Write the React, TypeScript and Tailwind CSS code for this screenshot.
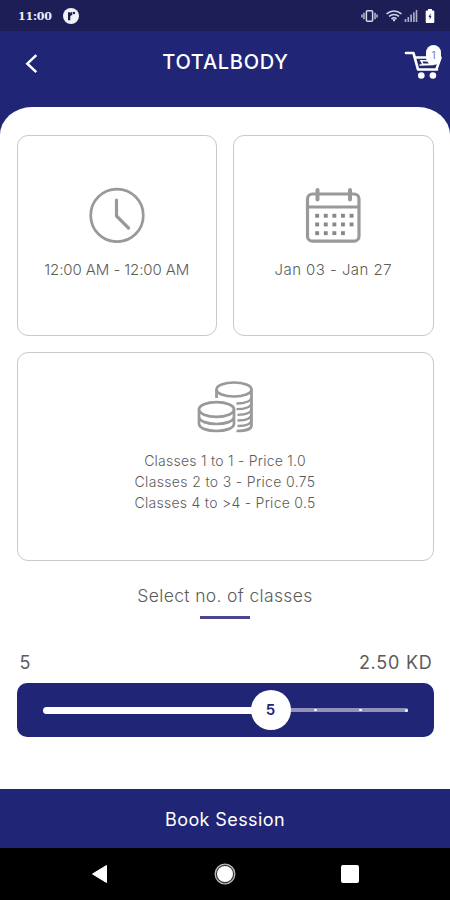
import type { ReactNode } from "react";

function StatusBar() {
  return (
    <div className="flex h-[31px] items-center bg-[#1c1e55] pt-px pr-[14px] pl-[18px]">
      <span className="mt-[3px] w-[35px] font-['DejaVu_Serif',serif] text-[11px] font-bold tracking-[-0.2px] whitespace-nowrap text-[#eeeef6]">
        11:00
      </span>
      <svg className="ml-[10px]" width="16" height="16" viewBox="0 0 16 16">
        <circle cx="8" cy="8" r="8" fill="#f1f1f8" />
        <path d="M5 4.2h2.3v1.2c.5-.9 1.2-1.4 2-1.4v3.2c-1.2-.1-2 .5-2 1.7v3.3H5z" fill="#1c1e55" />
        <circle cx="11" cy="5" r="1.2" fill="#1c1e55" />
      </svg>
      <svg className="ml-auto" width="75" height="16" viewBox="0 0 75 16" fill="none">
        <rect x="5.4" y="2.8" width="6.2" height="10.4" rx="1" stroke="#d4d5e6" strokeWidth="1.5" />
        <path d="M3 4.8v6.4M14 4.8v6.4M1 6.5v3M16 6.5v3" stroke="#c5c6da" strokeWidth="1.4" />
        <path d="M25.5 5.8q7.5-5.6 15 0M28 8.4q5-3.7 10 0M30.4 10.8q2.6-2 5.2 0" stroke="#d4d5e6" strokeWidth="1.6" />
        <path d="M31.4 11.3h3.2L33 13.8z" fill="#fff" />
        <path d="M44.5 11v3M47.3 9v5M50.1 6.5V14M52.9 4.3V14M55.5 2v12" stroke="#aeb0c9" strokeWidth="1.6" />
        <path d="M67 1h4v1.5h1.3q1 0 1 1V14q0 1-1 1h-6.600q-1 0-1-1V3.500q0-1 1-1H67z" fill="#fff" />
        <path d="M69.500 5.500 67.500 9h1.200v2.700L70.500 8.200h-1z" fill="#1c1e55" />
      </svg>
    </div>
  );
}

function Header() {
  return (
    <header className="flex h-[76px] items-start justify-between pt-[12px] pr-[8px] pl-[24px] text-white">
      <svg className="mt-[10px]" width="15" height="21" viewBox="0 0 15 21" fill="none">
        <path d="M12.300 2.200 3.300 10.700 12.300 19.200" stroke="white" strokeWidth="2.500" />
      </svg>
      <h1 className="ml-[8px] font-['Inter',sans-serif] text-[20px] leading-[39px] font-medium tracking-[0.7px] whitespace-nowrap">
        TOTALBODY
      </h1>
      <div className="relative h-[38px] w-[38px]">
        <svg width="38" height="38" viewBox="0 0 38 38" fill="none">
          <path d="M2 10h7.500l4.500 16.500h19" stroke="white" strokeWidth="2.700" strokeLinecap="round" strokeLinejoin="round" />
          <path d="M11 14.500h25.500L32.500 26" stroke="white" strokeWidth="2.600" strokeLinejoin="round" />
          <path d="m15.500 22 14-.5M17 17.800h9v3.500h-7z" stroke="white" strokeWidth="1.600" />
          <circle cx="17.300" cy="32.500" r="3.300" fill="white" />
          <circle cx="28.900" cy="32.500" r="3.300" fill="white" />
        </svg>
        <span className="absolute top-[2px] right-[1px] flex h-[20px] w-[15px] items-center justify-center rounded-full bg-white font-['Inter',sans-serif] text-[10px] text-[#7779aa]">
          1
        </span>
      </div>
    </header>
  );
}

function Card({ children, className }: { children: ReactNode; className: string }) {
  return (
    <section className={"flex flex-col items-center rounded-[11px] border-[1.5px] border-[#c9c9c9] bg-white " + className}>
      {children}
    </section>
  );
}

function ClockIcon() {
  return (
    <svg width="56" height="56" viewBox="0 0 56 56" fill="none" stroke="#999" strokeWidth="2.700">
      <circle cx="28" cy="28.400" r="26.300" />
      <path d="M27.500 13v16l12 12" strokeWidth="3.200" strokeLinecap="round" strokeLinejoin="round" />
    </svg>
  );
}

function CalendarIcon() {
  const rows = [5, 5, 4];
  return (
    <svg width="56" height="56" viewBox="0 0 56 56" fill="none" stroke="#999" strokeWidth="3.200">
      <rect x="2.500" y="7" width="51.500" height="47.200" rx="5" />
      <path d="M3 20h51" strokeWidth="2.800" />
      <path d="M12.500 3v9.500M45 3v9.500" strokeWidth="4" strokeLinecap="round" />
      {rows.flatMap((count, row) =>
        Array.from({ length: count }, (_, col) => (
          <rect key={`${row}-${col}`} x={10.2 + col * 8.6} y={26.8 + row * 8.7} width="3.900" height="3.900" fill="#888" stroke="none" />
        )),
      )}
    </svg>
  );
}

function CoinsIcon() {
  return (
    <svg width="56" height="54" viewBox="0 0 56 54" fill="none" stroke="#999" strokeWidth="2.700">
      <ellipse cx="19.500" cy="28.500" rx="17.500" ry="7.300" />
      <path d="M2 28.500v14c0 10 35 10 35 0v-14M2 35.500c0 10 35 10 35 0" />
      <ellipse cx="37" cy="8.500" rx="17.500" ry="7" />
      <path d="M19.500 17V8.500M54.500 8.500v36c0 3-5 5.500-15 5.500" />
      <path d="M39.500 22.500c9 0 15-2.500 15-6.500M39.500 28.200c9 0 15-2.500 15-6.500M40.500 33.800c9 0 14-2.500 14-6.500M40.500 39.500c9 0 14-2.500 14-6.500M40.500 45c9 0 14-2.500 14-6.500" strokeWidth="2.300" />
    </svg>
  );
}

function ClassSlider() {
  return (
    <div className="flex h-[54px] items-center rounded-[10px] bg-[#212576] px-[26px]">
      <div className="h-[7px] w-[209px] rounded-l-full bg-white" />
      <div className="z-10 -mr-px -ml-px flex h-[40px] w-[40px] shrink-0 items-center justify-center rounded-full bg-white font-['Inter',sans-serif] text-[15px] font-semibold text-[#212576]">
        5
      </div>
      <div className="flex h-[4px] flex-1 items-center justify-between rounded-r-full bg-[#9092bb] pl-[24px]">
        <i className="h-[2px] w-[3px] rounded-full bg-white" />
        <i className="h-[2px] w-[3px] rounded-full bg-white" />
        <i className="h-[3px] w-[3px] rounded-full bg-white" />
      </div>
    </div>
  );
}

function NavigationBar() {
  return (
    <nav className="flex h-[52px] items-center justify-between bg-black pr-[91px] pl-[91px]">
      <svg width="17" height="20" viewBox="0 0 17 20">
        <path d="M1.500 10 15.500 1.500v17z" fill="white" stroke="white" strokeLinejoin="round" />
      </svg>
      <svg className="ml-px" width="22" height="22" viewBox="0 0 22 22">
        <circle cx="11" cy="11" r="9.800" fill="#333" stroke="#bbb" strokeWidth="1.300" />
        <circle cx="11" cy="11" r="8" fill="white" />
      </svg>
      <div className="h-[18px] w-[18px] rounded-[2px] bg-white" />
    </nav>
  );
}

export default function App() {
  return (
    <main className="flex h-[900px] w-[450px] flex-col overflow-hidden bg-[#212576] font-['Inter',sans-serif] text-[#5c5c5c]">
      <StatusBar />
      <Header />
      <div className="flex h-[682px] flex-col rounded-t-[32px_28px] bg-white px-[16.500px] pt-[28px]">
        <div className="grid grid-cols-2 gap-[16px]">
          <Card className="h-[201px] pt-[51px]">
            <ClockIcon />
            <p className="mt-[16px] text-[15px] leading-[22px] font-light tracking-[-0.08px] whitespace-nowrap">12:00 AM - 12:00 AM</p>
          </Card>
          <Card className="h-[201px] pt-[51px]">
            <CalendarIcon />
            <p className="mt-[16px] text-[15px] leading-[22px] font-light tracking-[0.45px] whitespace-nowrap">Jan 03 - Jan 27</p>
          </Card>
        </div>
        <Card className="mt-[16px] h-[209px] pt-[28px]">
          <CoinsIcon />
          <div className="mt-[15px] text-center text-[14px] leading-[21px] font-light whitespace-nowrap">
            <p className="tracking-[0.25px]">Classes 1 to 1 - Price 1.0</p>
            <p className="tracking-[0.35px]">Classes 2 to 3 - Price 0.75</p>
            <p className="tracking-[0.28px]">Classes 4 to &gt;4 - Price 0.5</p>
          </div>
        </Card>
        <h2 className="mt-[22px] text-center text-[17.500px] leading-[26px] font-light tracking-[0.35px] whitespace-nowrap">Select no. of classes</h2>
        <div className="mx-auto mt-[7px] h-[3px] w-[50px] bg-[#4a4790]" />
        <div className="mt-[31px] flex justify-between pr-[1px] pl-[3px] text-[18px] leading-[26px] font-normal">
          <span>5</span>
          <span className="tracking-[0.75px]">2.50 KD</span>
        </div>
        <div className="mt-[7px]">
          <ClassSlider />
        </div>
      </div>
      <button className="h-[59px] shrink-0 pt-px text-[18px] tracking-[0.4px] text-white">Book Session</button>
      <NavigationBar />
    </main>
  );
}
